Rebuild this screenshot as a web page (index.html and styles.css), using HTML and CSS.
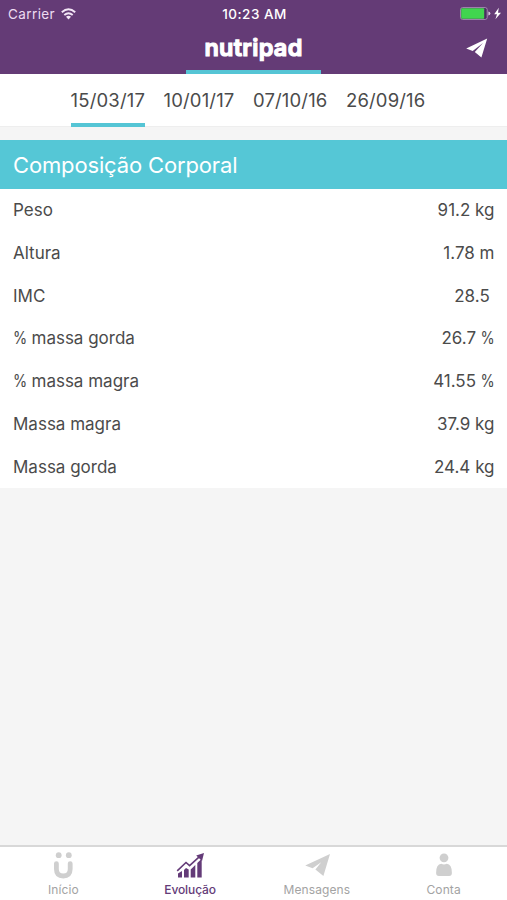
FILE: index.html
```html
<!DOCTYPE html>
<html lang="pt">
<head>
    <meta charset="UTF-8">
    <meta name="viewport" content="width=device-width, initial-scale=1.0">
    <title>nutripad</title>
    <link rel="stylesheet" href="styles.css">
</head>
<body>

    <header class="header">
        <div class="status-bar">
            <div class="status-left">
                <span class="carrier">Carrier</span>
                <svg class="wifi" width="15" height="12" viewBox="0 0 15 12" fill="none" stroke="#f3e6f6" stroke-width="1.9">
                    <path d="M0.8 4.3 Q7.5 -1.6 14.2 4.3"/>
                    <path d="M3.3 7 Q7.5 3.4 11.7 7"/>
                    <path d="M5 8.7 Q7.5 6.6 10 8.7 L7.5 11.4 Z" fill="#f3e6f6" stroke="none"/>
                </svg>
            </div>
            <span class="time">10:23 AM</span>
            <div class="status-right">
                <svg width="42" height="14" viewBox="0 0 42 14">
                    <rect x="0.6" y="0.6" width="26.6" height="11.8" rx="2" fill="#4a2c60" stroke="#a78bb3"/>
                    <rect x="1.2" y="1.2" width="23" height="10.6" rx="1" fill="#41d54f"/>
                    <path d="M28.4 4.6 Q30.4 5 30.4 6.5 Q30.4 8 28.4 8.4 Z" fill="#d9c8df"/>
                    <path d="M38.8 0.8 L34.2 7.3 H37 L35.4 12.2 L41 5.8 H38 Z" fill="#fff"/>
                </svg>
            </div>
        </div>
        <div class="nav-bar">
            <div class="logo">nutripad</div>
            <svg class="send" width="22" height="20" viewBox="0 0 22 20">
                <path d="M21.2 0.4 L0.2 10.6 L6.7 13.1 L17 4.9 L8.8 14.1 L15.4 19.4 Z" fill="#fff"/>
            </svg>
        </div>
    </header>

    <nav class="dates">
        <a class="date active">15/03/17</a>
        <a class="date">10/01/17</a>
        <a class="date">07/10/16</a>
        <a class="date">26/09/16</a>
    </nav>

    <main class="content">
        <h2 class="section-title">Composição Corporal</h2>
        <ul class="list">
            <li class="row"><span>Peso</span><span>91.2 kg</span></li>
            <li class="row"><span>Altura</span><span>1.78 m</span></li>
            <li class="row"><span>IMC</span><span>28.5&nbsp;</span></li>
            <li class="row"><span><span class="pct">%</span> massa gorda</span><span>26.7 <span class="pct">%</span></span></li>
            <li class="row"><span><span class="pct">%</span> massa magra</span><span>41.55 <span class="pct">%</span></span></li>
            <li class="row"><span>Massa magra</span><span>37.9 kg</span></li>
            <li class="row"><span>Massa gorda</span><span>24.4 kg</span></li>
        </ul>
    </main>

    <footer class="tab-bar">
        <a class="tab">
            <svg width="28" height="28" viewBox="0 0 28 28">
                <circle cx="9.7" cy="3.2" r="2.9" fill="#cfcfcf"/>
                <circle cx="19.8" cy="3.2" r="2.9" fill="#cfcfcf"/>
                <path d="M7.4 11.6 V17 Q7.4 24 14.3 24 Q21.2 24 21.2 17 V11.6" fill="none" stroke="#cfcfcf" stroke-width="4.8" stroke-linecap="round"/>
            </svg>
            <span>Início</span>
        </a>
        <a class="tab active">
            <svg width="28" height="28" viewBox="0 0 28 28" fill="#643b78">
                <path d="M2 21.5 L6 19 V25.5 H2 Z"/>
                <path d="M8 18 L10 16 L12.7 17.5 V25.5 H8 Z"/>
                <path d="M14.7 17.5 L19.3 13 V25.5 H14.7 Z"/>
                <path d="M21.3 11 L25.7 6.8 V25.5 H21.3 Z"/>
                <path d="M1.2 18.8 L10 10.5 L13.6 13.6 L24 4.2" fill="none" stroke="#643b78" stroke-width="1.6"/>
                <path d="M28 1 L20.2 3.4 L26 9 Z"/>
            </svg>
            <span>Evolução</span>
        </a>
        <a class="tab">
            <svg width="28" height="28" viewBox="0 0 28 28">
                <path d="M27 2 L2.2 13.6 L9.6 16.2 L18.2 10.2 L12.4 17.6 L20.4 24 Z" fill="#cfcfcf"/>
            </svg>
            <span>Mensagens</span>
        </a>
        <a class="tab">
            <svg width="28" height="28" viewBox="0 0 28 28" fill="#cfcfcf">
                <circle cx="14" cy="5.8" r="4.4"/>
                <path d="M6.1 21 Q6.1 12 11.3 11.8 Q14 13.2 16.7 11.8 Q21.9 12 21.9 21 Q21.9 24 19.1 24 H8.9 Q6.1 24 6.1 21 Z"/>
            </svg>
            <span>Conta</span>
        </a>
    </footer>

</body>
</html>
```
FILE: styles.css
```css
* {
    box-sizing: border-box;
}
body {
    font-family: Inter, 'Liberation Sans', sans-serif;
    background: #f5f5f5;
    color: #4b4b4b;
    display: flex;
    flex-direction: column;
    height: 900px;
    margin: 0;
}
.header {
    background: #643b76;
    height: 74px;
    color: #fff;
}
.status-bar {
    display: grid;
    grid-template-columns: 1fr auto 1fr;
    align-items: center;
    height: 27px;
    padding: 0 5px 0 8px;
    font-size: 13.5px;
}
.status-left {
    display: flex;
    align-items: center;
    gap: 6px;
    color: #eddcf1;
    letter-spacing: 0.4px;
}
.time {
    font-weight: 500;
    letter-spacing: 0.5px;
    margin-left: -1px;
}
.status-right {
    display: flex;
    justify-content: flex-end;
}
.nav-bar {
    display: grid;
    grid-template-columns: 1fr 135px 1fr;
    height: 47px;
    padding: 0 19px;
}
.logo {
    grid-column: 2;
    border-bottom: 4px solid #55c5d5;
    font-size: 23.5px;
    font-weight: 600;
    line-height: 41px;
    text-align: center;
    letter-spacing: 0.3px;
    -webkit-text-stroke: 1.2px #fff;
}
.send {
    justify-self: end;
    margin-top: 11px;
}
.dates {
    display: flex;
    justify-content: center;
    gap: 18.5px;
    height: 53px;
    padding-right: 11px;
    background: #fff;
    border-bottom: 1px solid #eee;
}
.date {
    height: 53px;
    font-size: 18.5px;
    line-height: 53px;
    letter-spacing: 0.15px;
}
.date.active {
    border-bottom: 4px solid #55c5d5;
}
.content {
    flex: 1;
    padding-top: 13px;
}
.section-title {
    height: 49px;
    margin: 0;
    padding: 0 13px;
    background: #55c7d6;
    color: #fff;
    font-size: 22px;
    font-weight: 400;
    line-height: 50px;
    letter-spacing: -0.15px;
}
.list {
    list-style: none;
    margin: 0;
    padding: 0;
    background: #fff;
}
.row {
    display: flex;
    justify-content: space-between;
    height: 42.75px;
    padding: 0 12.5px 0 13px;
    font-size: 17px;
    line-height: 43.5px;
}
.pct {
    display: inline-block;
    font-size: 17px;
    transform: scaleX(0.85);
    transform-origin: left;
    margin-right: -3px;
}
.pct:last-child {
    transform-origin: right;
    margin-right: 0;
    margin-left: -3px;
}
.row > span:first-child .pct {
    transform-origin: left;
    margin-right: -3px;
    margin-left: 0;
}
.tab-bar {
    display: grid;
    grid-template-columns: repeat(4, 1fr);
    height: 55px;
    background: #fff;
    border-top: 2px solid #d8d8d8;
}
.tab {
    display: flex;
    flex-direction: column;
    align-items: center;
    padding-top: 5px;
    color: #a3a3a3;
    font-size: 12px;
    line-height: 20px;
    letter-spacing: 0.1px;
}
.tab.active {
    color: #643b78;
    font-weight: 500;
    letter-spacing: -0.1px;
}
```
